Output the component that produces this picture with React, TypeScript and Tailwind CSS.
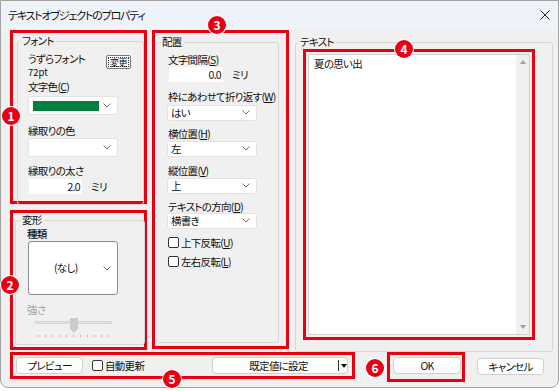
import React from "react";

const red = "border-[3px] border-[#e60012]";
const group = "border border-[#d6d6d6] rounded-[3px]";
const legend = "ml-[2px] px-[2px] leading-[14px]";
const field = "bg-white border border-[#e3e3e3] rounded-[2px]";
const btn = "bg-[#fdfdfd] border border-[#cfcfcf] rounded-[4px] flex items-center justify-center";

function Chevron() {
  return (
    <svg width="8" height="5" viewBox="0 0 8 5" className="shrink-0">
      <path d="M0.5 0.5 L4 4 L7.5 0.5" fill="none" stroke="#707070" strokeWidth="1" />
    </svg>
  );
}

function Select({ text }: { text: string }) {
  return (
    <div className={`${field} w-[90px] h-[16px] flex items-center justify-between pl-[3px] pr-[6px] leading-[14px]`}>
      <span>{text}</span>
      <Chevron />
    </div>
  );
}

function Check({ label }: { label: React.ReactNode }) {
  return (
    <div className="flex items-center leading-[14px]">
      <div className="w-[11px] h-[11px] border border-[#333] rounded-[2px] bg-white" />
      <span className="ml-[2px]">{label}</span>
    </div>
  );
}

function Badge({ n, pos }: { n: number; pos: string }) {
  return (
    <div
      className={`absolute ${pos} w-[18px] h-[18px] rounded-full bg-[#e60012] ring-1 ring-white text-white text-[12px] font-bold leading-none tracking-normal flex items-center justify-center`}
    >
      {n}
    </div>
  );
}

export default function App() {
  return (
    <div className="relative w-[560px] h-[391px] bg-white text-[10.5px] tracking-[-0.7px] whitespace-nowrap text-[#111] font-['Noto_Sans_CJK_JP',sans-serif] [font-feature-settings:'palt'] overflow-hidden">
      <div className="w-[559px] h-[388px] border border-[#a3a3a3] rounded-b-[8px] bg-[#f0f0f0] overflow-hidden flex flex-col">
        {/* title bar */}
        <div className="h-[28px] bg-[#eef3f9] flex items-center justify-between pl-[7px] pr-[8px]">
          <span className="text-[11px] tracking-[-1.2px]">テキストオブジェクトのプロパティ</span>
          <svg width="10" height="10" viewBox="0 0 10 10">
            <path d="M0.5 0.5 L9.5 9.5 M9.5 0.5 L0.5 9.5" stroke="#222" strokeWidth="1" />
          </svg>
        </div>

        {/* main row */}
        <div className="flex items-start pl-[9px] pt-[1px] h-[322px]">
          {/* left column */}
          <div className="w-[137px] flex flex-col">
            <div className={`${red} h-[174px]`}>
              <fieldset className={`${group} ml-[4px] mt-[1px] w-[127px] h-[171px]`}>
                <legend className={legend}>フォント</legend>
                <div className="pl-[10px]">
                  <div className="flex mt-[4px]">
                    <div className="w-[78px]">
                      <div className="leading-[14px]">うずらフォント</div>
                      <div className="text-[9.5px] tracking-normal leading-[12px]">72pt</div>
                    </div>
                    <div className="mt-[3px] w-[25px] h-[14px] border border-[#7a7a7a] rounded-[2px] bg-[#fdfdfd] p-[1px]">
                      <div className="w-full h-full border border-dotted border-[#333] text-[9px] tracking-[-0.5px] leading-[9px] text-center">変更</div>
                    </div>
                  </div>
                  <div className="mt-[2px] leading-[14px]">
                    文字色(<u>C</u>)
                  </div>
                  <div className={`${field} mt-[2px] w-[90px] h-[19px] flex items-center justify-between pl-[4px] pr-[6px]`}>
                    <div className="w-[66px] h-[10px] bg-[#008040]" />
                    <Chevron />
                  </div>
                  <div className="mt-[9px] leading-[14px]">縁取りの色</div>
                  <div className={`${field} w-[90px] h-[19px] flex items-center justify-end pr-[6px]`}>
                    <Chevron />
                  </div>
                  <div className="mt-[7px] leading-[14px]">縁取りの太さ</div>
                  <div className="mt-[1px] flex items-center">
                    <div className="ml-[1px] w-[53px] h-[15px] bg-white text-right pr-[2px] leading-[15px]">2.0</div>
                    <span className="ml-[9px]">ミリ</span>
                  </div>
                </div>
              </fieldset>
            </div>

            <div className={`${red} h-[140px] mt-[6px]`}>
              <fieldset className={`${group} ml-[2px] mt-[1px] w-[130px] h-[131px]`}>
                <legend className="ml-[4px] px-[2px] leading-[12px]">変形</legend>
                <div className="pl-[11px]">
                  <div className="mt-[1px] leading-[13px] font-medium">種類</div>
                  <div className="mt-[1px] ml-[1px] w-[90px] h-[54px] bg-white border border-[#8c8c8c] rounded-[3px] flex items-center justify-between pl-[25px] pr-[6px]">
                    <span>(なし)</span>
                    <Chevron />
                  </div>
                  <div className="mt-[8px] leading-[14px] text-[#a0a0a0]">強さ</div>
                  <div className="relative ml-[8px] mt-[1px] w-[77px] h-[20px]">
                    <div className="absolute left-0 right-0 top-[3px] h-[3px] bg-[#e2e2e2] border border-[#d6d6d6]" />
                    <div className="absolute left-[35px] top-0 w-[8px] h-[11px] bg-[#cccccc]" />
                    <div className="absolute left-[35px] top-[11px] w-0 h-0 border-l-[4px] border-r-[4px] border-t-[4px] border-l-transparent border-r-transparent border-t-[#cccccc]" />
                    <div className="absolute left-[3px] right-[3px] top-[17px] flex justify-between">
                      {Array.from({ length: 11 }).map((_, i) => (
                        <div key={i} className="w-px h-[2px] bg-[#b8b8b8]" />
                      ))}
                    </div>
                  </div>
                </div>
              </fieldset>
            </div>
          </div>

          {/* middle column */}
          <div className={`${red} ml-[5px] w-[137px] h-[319px]`}>
            <fieldset className={`${group} ml-[2px] mt-[2px] w-[122px] h-[308px] border-l-transparent`}>
              <legend className={legend}>配置</legend>
              <div className="pl-[10px]">
                <div className="mt-[4px] leading-[14px]">
                  文字間隔(<u>S</u>)
                </div>
                <div className="flex items-center">
                  <div className="ml-[1px] w-[54px] h-[15px] bg-white text-right pr-[2px] leading-[15px]">0.0</div>
                  <span className="ml-[9px]">ミリ</span>
                </div>
                <div className="mt-[7px] leading-[14px]">
                  枠にあわせて折り返す(<u>W</u>)
                </div>
                <div className="mt-[1px] ml-[-1px]">
                  <Select text="はい" />
                </div>
                <div className="mt-[6px] leading-[14px]">
                  横位置(<u>H</u>)
                </div>
                <div className="ml-[-1px]">
                  <Select text="左" />
                </div>
                <div className="mt-[7px] leading-[14px]">
                  縦位置(<u>V</u>)
                </div>
                <div className="ml-[-1px]">
                  <Select text="上" />
                </div>
                <div className="mt-[6px] leading-[14px]">
                  テキストの方向(<u>D</u>)
                </div>
                <div className="ml-[-1px] mt-[-1px]">
                  <Select text="横書き" />
                </div>
                <div className="mt-[7px]">
                  <Check label={<>上下反転(<u>U</u>)</>} />
                </div>
                <div className="mt-[5px]">
                  <Check label={<>左右反転(<u>L</u>)</>} />
                </div>
              </div>
            </fieldset>
          </div>

          {/* right column */}
          <fieldset className={`${group} ml-[6px] mt-[5px] w-[258px] h-[317px]`}>
            <legend className={legend}>テキスト</legend>
            <div className={`${red} ml-[7px] mt-[0px] w-[232px] h-[291px] p-[2px]`}>
              <div className="w-[222px] h-[281px] bg-white border border-[#d0d0d0] flex">
                <div className="flex-1 pl-[5px] pt-[2px] leading-[14px]">夏の思い出</div>
                <div className="w-[13px] bg-[#f0f0f0] flex flex-col items-center justify-between py-[5px]">
                  <div className="w-0 h-0 border-l-[3px] border-r-[3px] border-b-[4px] border-l-transparent border-r-transparent border-b-[#a0a0a0]" />
                  <div className="w-0 h-0 border-l-[3px] border-r-[3px] border-t-[4px] border-l-transparent border-r-transparent border-t-[#a0a0a0]" />
                </div>
              </div>
            </div>
          </fieldset>
        </div>

        {/* bottom row */}
        <div className="flex items-start pl-[9px] mt-[1px]">
          <div className={`${red} w-[345px] h-[27px] flex items-center`}>
            <div className={`${btn} ml-[3px] w-[67px] h-[17px]`}>プレビュー</div>
            <div className="ml-[9px]">
              <Check label="自動更新" />
            </div>
            <div className={`${btn} ml-auto mr-[4px] w-[136px] h-[17px] !justify-start`}>
              <span className="w-[126px] text-center pl-[6px]">既定値に設定</span>
              <div className="w-px h-[11px] bg-[#333]" />
              <div className="ml-[2px] w-0 h-0 border-l-[3.5px] border-r-[3.5px] border-t-[4px] border-l-transparent border-r-transparent border-t-[#111]" />
            </div>
          </div>
          <div className={`${red} ml-[32px] w-[78px] h-[30px] pt-[2px] pl-[3px]`}>
            <div className={`${btn} w-[68px] h-[17px]`}>OK</div>
          </div>
          <div className={`${btn} ml-[12px] mt-[6px] w-[67px] h-[17px]`}>キャンセル</div>
        </div>
      </div>

      <Badge n={1} pos="left-[2px] top-[107px]" />
      <Badge n={2} pos="left-[1px] top-[276px]" />
      <Badge n={3} pos="left-[208px] top-[16px]" />
      <Badge n={4} pos="left-[395px] top-[40px]" />
      <Badge n={5} pos="left-[163px] top-[370px]" />
      <Badge n={6} pos="left-[366px] top-[359px]" />
    </div>
  );
}
